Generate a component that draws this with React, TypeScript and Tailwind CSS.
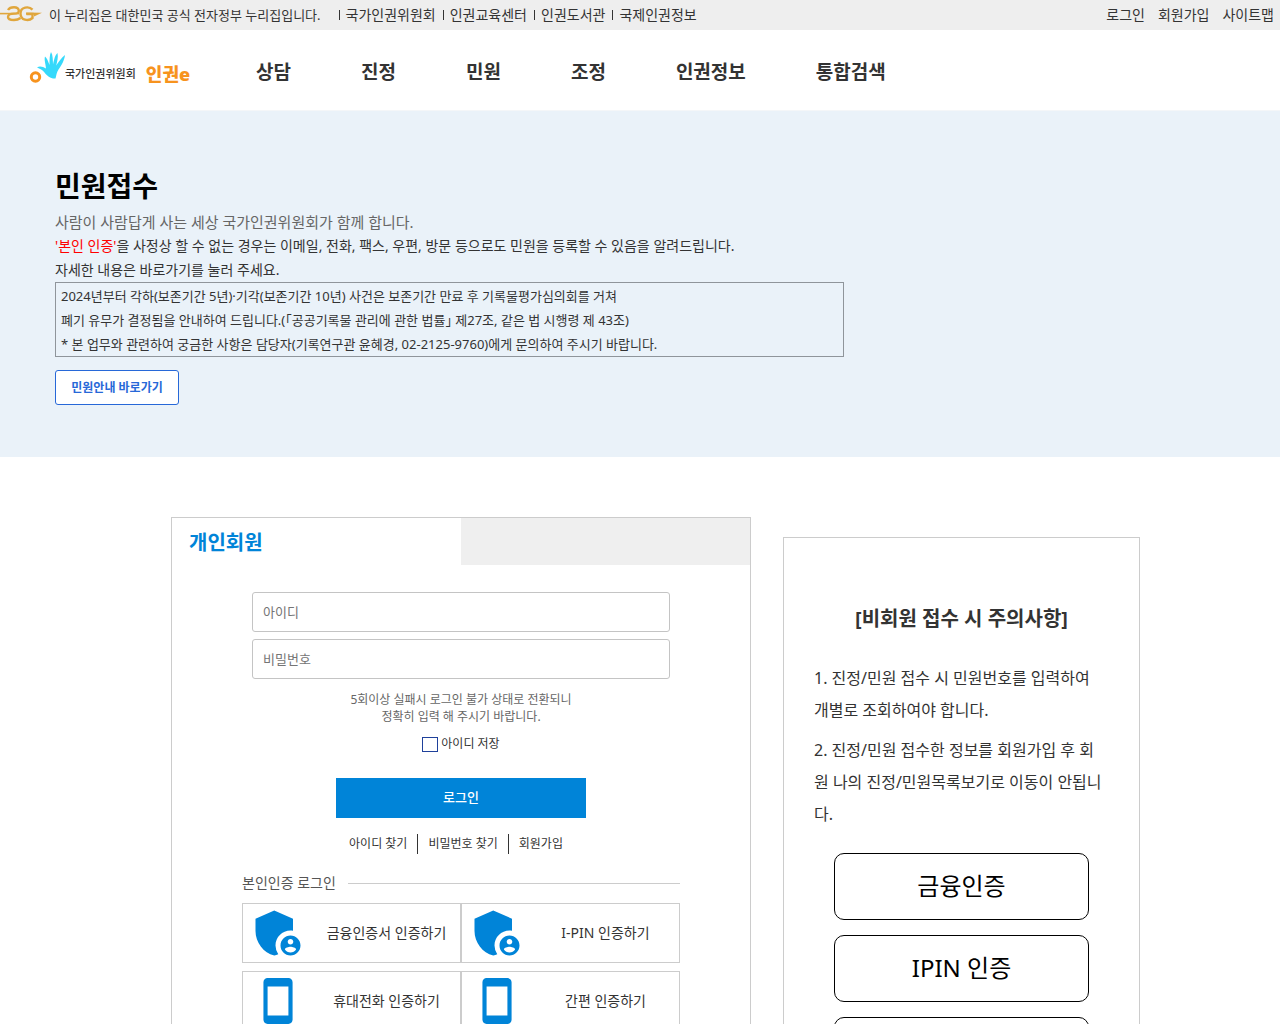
import React from 'react';

const familySites = ['국가인권위원회', '인권교육센터', '인권도서관', '국제인권정보'];
const userLinks = ['로그인', '회원가입', '사이트맵'];
const menus = ['상담', '진정', '민원', '조정', '인권정보', '통합검색'];
const findLinks = ['아이디 찾기', '비밀번호 찾기', '회원가입'];
const guestAuths = ['금융인증', 'IPIN 인증', '휴대폰 인증'];

const certs: { label: string; icon: keyof typeof iconMap }[] = [
  { label: '금융인증서 인증하기', icon: 'shield' },
  { label: 'I-PIN 인증하기', icon: 'shield' },
  { label: '휴대전화 인증하기', icon: 'phone' },
  { label: '간편 인증하기', icon: 'phone' },
];

const iconMap = {
  shield: (
    <svg className="w-[60px] h-[60px]" viewBox="0 0 24 24" fill="currentColor" aria-hidden="true">
      <path d="M17 11c.34 0 .67.04 1 .09V6.27L10.5 3 3 6.27v4.91c0 4.54 3.2 8.79 7.5 9.82.55-.13 1.08-.32 1.6-.55A5.973 5.973 0 0 1 11 17c0-3.31 2.69-6 6-6z" />
      <path d="M17 13c-2.21 0-4 1.79-4 4s1.79 4 4 4 4-1.79 4-4-1.79-4-4-4zm0 1.38c.62 0 1.12.51 1.12 1.12s-.51 1.12-1.12 1.12-1.12-.51-1.12-1.12.5-1.12 1.12-1.12zm0 5.37c-.93 0-1.74-.46-2.24-1.17.05-.72 1.51-1.08 2.24-1.08s2.19.36 2.24 1.08c-.5.71-1.31 1.17-2.24 1.17z" />
    </svg>
  ),
  phone: (
    <svg className="w-[50px] h-[50px]" viewBox="0 0 24 24" fill="currentColor" aria-hidden="true">
      <path d="M17 1.01L7 1c-1.1 0-1.99.9-1.99 2v18c0 1.1.89 2 1.99 2h10c1.1 0 2-.9 2-2V3c0-1.1-.9-1.99-2-1.99zM17 19H7V5h10v14z" />
    </svg>
  ),
};

function TopBar() {
  return (
    <div className="flex items-center h-[30px] bg-[#eeeeee] pr-[6px] text-sm">
      <svg className="w-[42px] h-5 shrink-0" viewBox="0 0 42 20" fill="none" stroke="#e0a63c" aria-hidden="true">
        <path strokeWidth="1.6" d="M0 8.600H19" />
        <path strokeWidth="2.4" d="M8 5C9.500 2.400 12 2.200 14 2.200C17 2.200 19 3.800 18.800 6C18.600 8 16.500 8.600 14 8.600C10 8.600 8 9.800 8 12C8 14 10.500 15 14 15C17 15 18.500 14.500 20.500 13" />
        <path strokeWidth="2.4" d="M32.500 4.600C29 1 20.500 1.800 20.500 8.400C20.500 15.400 28.500 16.600 32.500 13V9H26.500" />
        <path fill="#e0a63c" stroke="none" d="M26 7.500L42 7.700L34 11.400V9.800H26z" />
      </svg>
      <p className="ml-[7px] text-[13px]">이 누리집은 대한민국 공식 전자정부 누리집입니다.</p>
      <ul className="flex items-center ml-[18px]">
        {familySites.map((site) => (
          <li key={site} className="flex items-center">
            <span className="w-px h-[10px] bg-[#333] mr-[6px]" aria-hidden="true" />
            <a href="#" className="mr-[7px]">{site}</a>
          </li>
        ))}
      </ul>
      <ul className="flex gap-[13px] ml-auto">
        {userLinks.map((link) => (
          <li key={link}>
            <a href="#">{link}</a>
          </li>
        ))}
      </ul>
    </div>
  );
}

function Header() {
  return (
    <header className="flex items-center h-[81px] pl-[29px] border-b border-[#f4f6f8]">
      <a href="#" className="flex items-center w-[166px] whitespace-nowrap" aria-label="국가인권위원회 인권e">
        <svg className="w-9 h-9 shrink-0" viewBox="0 0 36 36" aria-hidden="true">
          <circle cx="6.500" cy="25" r="4.200" fill="none" stroke="#f7931e" strokeWidth="3" />
          <path fill="#35d9fb" d="M8 15.500C11 13.500 14 15 17 16.500C16.500 11 15 8 16 4.500C18 6 19 9 20.500 13C20.500 8 20.500 3 22 0C24 3 23.800 8 24 12.500C25 8 26 3 28.500 1C29.500 5 28 10 27.200 13.500C29.500 10 32.500 5.500 36 3C35.500 8 32.500 13.500 29.500 17.500C27.500 20.500 27.500 23 26.500 26.500C22 27 18 24 15.500 20.500C13.500 17.500 11 17 8 15.500z" />
        </svg>
        <span className="mt-2 text-[11px] font-medium">국가인권위원회</span>
        <span className="ml-[10px] mt-2 text-lg font-black text-[#f7931e]">인권e</span>
      </a>
      <nav className="ml-[61px] pt-1">
        <ul className="flex gap-[70px] text-[19px] font-bold">
          {menus.map((menu) => (
            <li key={menu}>
              <a href="#">{menu}</a>
            </li>
          ))}
        </ul>
      </nav>
    </header>
  );
}

function Intro() {
  return (
    <section className="bg-[#eaf2f9] px-[55px] pt-[51px] pb-[52px] text-sm leading-6">
      <h1 className="text-[28px] leading-[48px] font-bold text-black">민원접수</h1>
      <p className="text-[15px] leading-6 text-[#666]">사람이 사람답게 사는 세상 국가인권위원회가 함께 합니다.</p>
      <p>
        <span className="text-[#f00]">'본인 인증'</span>을 사정상 할 수 없는 경우는 이메일, 전화, 팩스, 우편, 방문 등으로도 민원을 등록할 수 있음을 알려드립니다.
      </p>
      <p>자세한 내용은 바로가기를 눌러 주세요.</p>
      <div className="max-w-[789px] border border-[#8f959b] pt-px pl-[5px] text-[13px] leading-6">
        <p>2024년부터 각하(보존기간 5년)·기각(보존기간 10년) 사건은 보존기간 만료 후 기록물평가심의회를 거쳐</p>
        <p>폐기 유무가 결정됨을 안내하여 드립니다.(｢공공기록물 관리에 관한 법률｣ 제27조, 같은 법 시행령 제 43조)</p>
        <p>* 본 업무와 관련하여 궁금한 사항은 담당자(기록연구관 윤혜경, 02-2125-9760)에게 문의하여 주시기 바랍니다.</p>
      </div>
      <a href="#" className="flex items-center justify-center w-[124px] h-[35px] mt-[13px] rounded-[3px] border border-[#2768d8] bg-white text-xs font-bold text-[#2768d8]">
        민원안내 바로가기
      </a>
    </section>
  );
}

function LoginPanel() {
  return (
    <section className="flex-1 border border-[#cccccc] pb-10">
      <div className="grid grid-cols-2 h-[47px]">
        <h2 className="flex items-center pl-[17px] pt-[2px] text-xl font-bold text-[#0084d8]">개인회원</h2>
        <div className="bg-[#efefef]" />
      </div>
      <form className="flex flex-col items-center mt-[27px] px-20 text-xs" onSubmit={(e) => e.preventDefault()}>
        <input type="text" aria-label="아이디" placeholder="아이디" className="w-full h-10 px-[10px] rounded-[3px] border border-[#c4c4c4] text-[13px] placeholder:text-[#757575]" />
        <input type="password" aria-label="비밀번호" placeholder="비밀번호" className="w-full h-10 mt-[7px] px-[10px] rounded-[3px] border border-[#c4c4c4] text-[13px] placeholder:text-[#757575]" />
        <p className="mt-3 text-center leading-[17px] text-[#666]">
          5회이상 실패시 로그인 불가 상태로 전환되니
          <br />
          정확히 입력 해 주시기 바랍니다.
        </p>
        <label className="flex items-center gap-[3px] h-5 mt-[9px]">
          <input type="checkbox" className="appearance-none w-4 h-[15px] border border-[#1f419b] bg-white checked:bg-[#1f419b]" />
          아이디 저장
        </label>
        <button type="submit" className="w-3/5 h-10 mt-6 bg-[#0084d8] text-[13px] font-medium text-white">로그인</button>
        <ul className="flex mt-4 pr-[10px] leading-5 divide-x divide-[#333]">
          {findLinks.map((link) => (
            <li key={link} className="px-[10px]">
              <a href="#">{link}</a>
            </li>
          ))}
        </ul>
      </form>
      <div className="mt-[19px] px-[70px] text-sm">
        <div className="flex items-center gap-3 leading-5 text-[#555]">
          <h3>본인인증 로그인</h3>
          <div className="flex-1 h-px bg-[#cccccc]" />
        </div>
        <div className="grid grid-cols-2 gap-y-2 mt-[10px]">
          {certs.map((cert) => (
            <button key={cert.label} type="button" className="flex items-center h-[60px] border border-[#cccccc]">
              <span className="flex justify-center w-[70px] shrink-0 text-[#0084d8]">{iconMap[cert.icon]}</span>
              <span className="flex-1">{cert.label}</span>
            </button>
          ))}
        </div>
      </div>
    </section>
  );
}

function GuestNotice() {
  return (
    <aside className="w-[357px] shrink-0 mt-5 border border-[#cccccc] px-[30px] pt-[65px] pb-10">
      <h2 className="text-center text-xl leading-8 font-bold">[비회원 접수 시 주의사항]</h2>
      <div className="mt-[27px] pr-1 space-y-2 text-base leading-8 break-all">
        <p>1. 진정/민원 접수 시 민원번호를 입력하여 개별로 조회하여야 합니다.</p>
        <p>2. 진정/민원 접수한 정보를 회원가입 후 회원 나의 진정/민원목록보기로 이동이 안됩니다.</p>
      </div>
      <div className="flex flex-col gap-[15px] mt-[23px] px-5">
        {guestAuths.map((auth) => (
          <button key={auth} type="button" className="h-[67px] pb-[2px] rounded-[10px] border border-black text-2xl text-black">
            {auth}
          </button>
        ))}
      </div>
    </aside>
  );
}

function App() {
  return (
    <div className="min-h-screen bg-white text-[#333] font-['Noto_Sans','Noto_Sans_CJK_KR',sans-serif]">
      <TopBar />
      <Header />
      <Intro />
      <main className="flex items-start gap-8 max-w-[1000px] mx-auto mt-[60px] pl-[31px]">
        <LoginPanel />
        <GuestNotice />
      </main>
    </div>
  );
}

export default App;
